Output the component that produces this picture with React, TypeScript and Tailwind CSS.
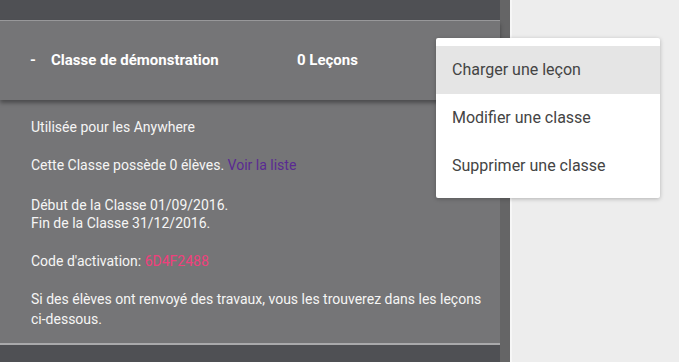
import React from 'react';

const menuItems = ['Charger une leçon', 'Modifier une classe', 'Supprimer une classe'];

export default function App() {
  return (
    <div className="relative flex h-[362px] w-[679px] overflow-hidden font-['Roboto',sans-serif]">
      {/* Colonne de gauche */}
      <div className="w-[500px] bg-[#4f5054] pt-5">
        <div className="border-t border-[#9b9b9d] bg-[#757577]">
          <div className="relative z-10 flex h-[79px] items-center text-[15px] font-bold text-white shadow-[0_3px_4px_rgba(0,0,0,0.35)]">
            <span className="w-[51px] pl-[30px]">-</span>
            <span className="w-[246px]">Classe de démonstration</span>
            <span>0 Leçons</span>
          </div>
          <div className="border-b-2 border-[#a9a9ab] pb-[14px] pl-[31px] pr-3 pt-[18px] text-[14px] leading-[18px] text-[#f5f5f5]">
            <p>Utilisée pour les Anywhere</p>
            <p className="mt-5">
              Cette Classe possède 0 élèves.{' '}
              <span className="text-[#5a2a93]">Voir la liste</span>
            </p>
            <p className="mt-[22px]">
              Début de la Classe 01/09/2016.
              <br />
              Fin de la Classe 31/12/2016.
            </p>
            <p className="mt-5">
              Code d'activation: <span className="text-[#f03f7c]">6D4F2488</span>
            </p>
            <p className="mt-[19px] leading-[20px]">
              Si des élèves ont renvoyé des travaux, vous les trouverez dans les leçons{' '}
              <span className="whitespace-nowrap">ci-dessous.</span>
            </p>
          </div>
        </div>
      </div>
      <div className="w-[10px] bg-[#656566]" />
      <div className="flex-1 border-l-2 border-[#f6f6f6] bg-[#ededed]" />

      {/* Menu contextuel */}
      <div className="absolute left-[436px] top-[38px] z-20 w-[224px] rounded-[2px] bg-white py-2 shadow-[0_1px_4px_rgba(0,0,0,0.25)]">
        {menuItems.map((item, i) => (
          <div
            key={item}
            className={`flex h-12 items-center pl-4 text-[16px] text-[#444444] ${i === 0 ? 'bg-[#e5e5e5]' : ''}`}
          >
            {item}
          </div>
        ))}
      </div>
    </div>
  );
}
